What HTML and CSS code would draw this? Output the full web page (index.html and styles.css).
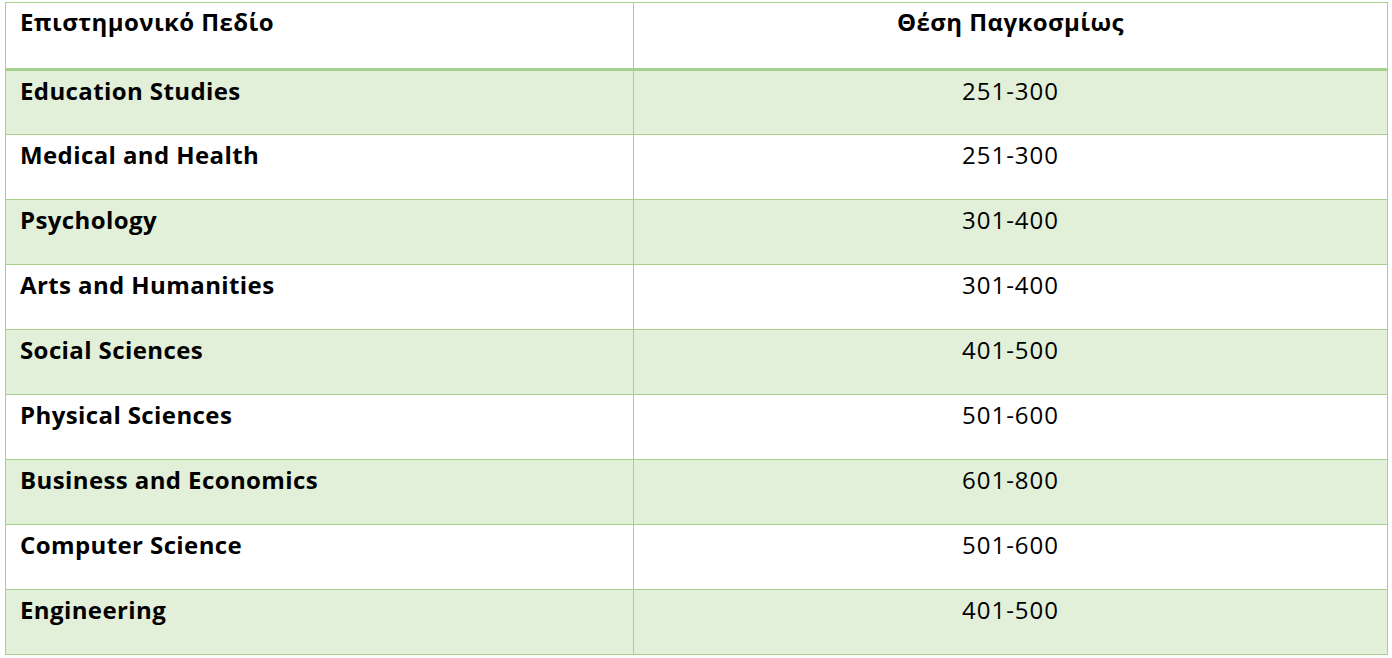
FILE: index.html
```html
<!DOCTYPE html>
<html lang="el">
<head>
<meta charset="utf-8">
<title>Θέση Παγκοσμίως</title>
<link rel="stylesheet" href="styles.css">
</head>
<body>
<table class="rank-table">
  <thead>
    <tr>
      <th class="field">Επιστημονικό Πεδίο</th>
      <th class="rank">Θέση Παγκοσμίως</th>
    </tr>
  </thead>
  <tbody>
    <tr class="shaded"><td class="field">Education Studies</td><td class="rank">251-300</td></tr>
    <tr><td class="field">Medical and Health</td><td class="rank">251-300</td></tr>
    <tr class="shaded"><td class="field">Psychology</td><td class="rank">301-400</td></tr>
    <tr><td class="field">Arts and Humanities</td><td class="rank">301-400</td></tr>
    <tr class="shaded"><td class="field">Social Sciences</td><td class="rank">401-500</td></tr>
    <tr><td class="field">Physical Sciences</td><td class="rank">501-600</td></tr>
    <tr class="shaded"><td class="field">Business and Economics</td><td class="rank">601-800</td></tr>
    <tr><td class="field">Computer Science</td><td class="rank">501-600</td></tr>
    <tr class="shaded"><td class="field">Engineering</td><td class="rank">401-500</td></tr>
  </tbody>
</table>
</body>
</html>
```

FILE: styles.css
```css
html, body {
  margin: 0;
  padding: 0;
  background: #ffffff;
}

body {
  padding: 2px 0 0 5px;
  font-family: "Open Sans", Lato, sans-serif;
  color: #000000;
}

.rank-table {
  border-collapse: collapse;
  width: 1383px;
  table-layout: fixed;
}

.rank-table th,
.rank-table td {
  border: 1px solid #a8d08d;
  height: 64px;
  box-sizing: border-box;
  padding: 5px 14px 0 14px;
  vertical-align: top;
  font-size: 24px;
  line-height: 30px;
}

.rank-table thead th {
  border-bottom: 3px solid #a8d08d;
  height: 67px;
  padding-top: 4px;
}

.rank-table tbody tr td {
  height: 65px;
}

.rank-table .field {
  width: 628px;
  text-align: left;
  font-weight: 700;
  letter-spacing: 0.4px;
}

.rank-table .rank {
  text-align: center;
  font-weight: 400;
  letter-spacing: 1px;
}

.rank-table thead .rank {
  font-weight: 700;
  letter-spacing: 0.4px;
}

.rank-table tr.shaded td {
  background: #e2efd9;
}
```
